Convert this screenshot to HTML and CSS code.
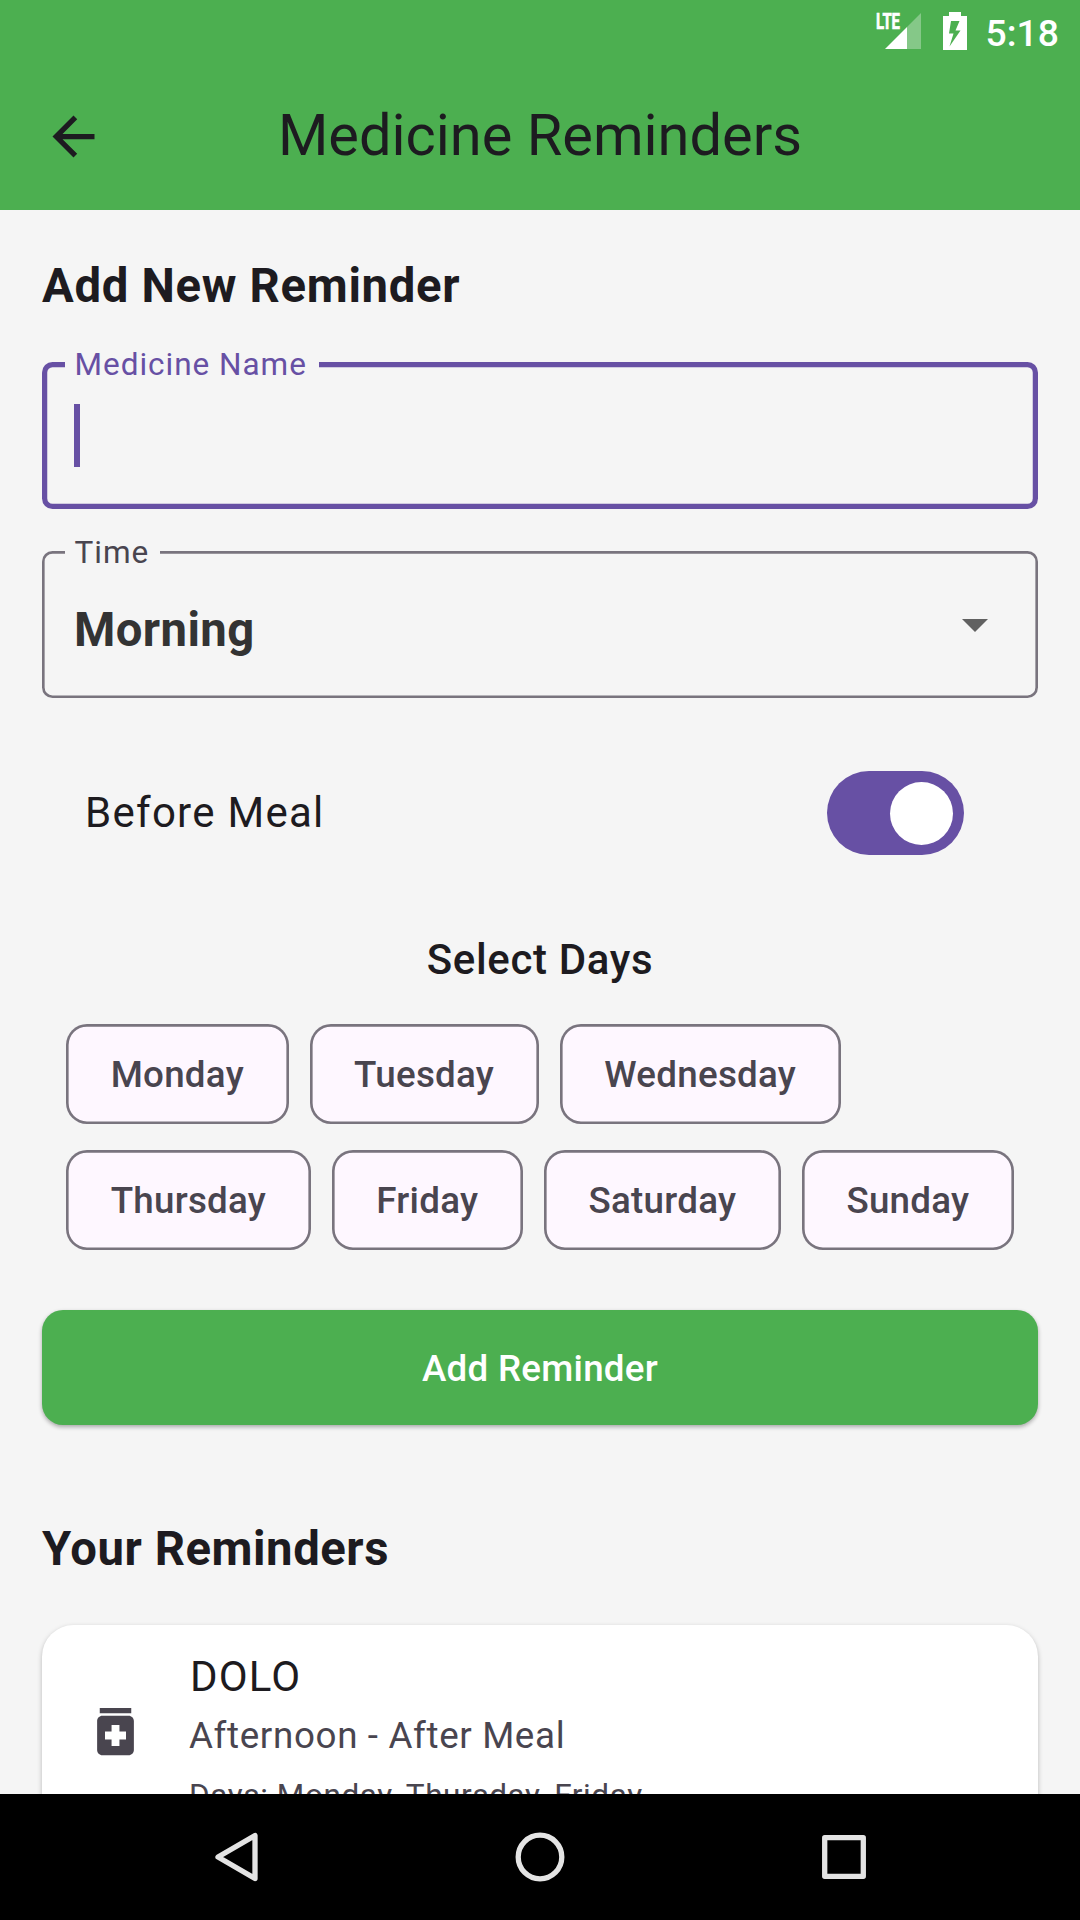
FILE: index.html
```html
<!DOCTYPE html>
<html lang="en">
<head>
<meta charset="utf-8">
<title>Medicine Reminders</title>
<link rel="stylesheet" href="styles.css">
</head>
<body>
<div class="screen">
  <header class="top">
    <div class="status">
      <svg class="signal" viewBox="0 0 48 40" width="48" height="40">
        <text class="lte" x="1" y="19" textLength="24" lengthAdjust="spacingAndGlyphs">LTE</text>
        <path d="M46 3V39H32V17Z" fill="#fff" fill-opacity=".32"/>
        <path d="M32 17V39H10Z" fill="#fff"/>
      </svg>
      <svg class="battery" viewBox="0 0 24 38" width="24" height="38">
        <path fill="#fff" fill-rule="evenodd" d="M6 0H18V4H24V38H0V4H6ZM8 9L6 21.500H10.500L6.500 34.500L17.500 18.500H12.500L16.500 9Z"/>
      </svg>
      <span class="clock">5:18</span>
    </div>
    <div class="appbar">
      <svg class="back" viewBox="0 0 24 24" width="63" height="63"><path fill="#1d1b20" d="M20 11H7.830l5.590-5.590L12 4l-8 8 8 8 1.410-1.410L7.830 13H20v-2z"/></svg>
      <h1 class="title">Medicine Reminders</h1>
    </div>
  </header>

  <main class="content">
    <h2 class="heading">Add New Reminder</h2>
    <div class="field field-focused">
      <span class="label">Medicine Name</span>
      <span class="caret"></span>
    </div>
    <div class="field field-select">
      <span class="label">Time</span>
      <span class="value">Morning</span>
      <svg class="drop" viewBox="0 0 26 13" width="26" height="13"><path fill="#616161" d="M0 0H26L13 13Z"/></svg>
    </div>
    <div class="meal">
      <span class="meal-label">Before Meal</span>
      <span class="switch"><span class="thumb"></span></span>
    </div>
    <h3 class="days-title">Select Days</h3>
    <div class="days">
      <div class="row"><button class="chip">Monday</button><button class="chip">Tuesday</button><button class="chip">Wednesday</button></div>
      <div class="row"><button class="chip">Thursday</button><button class="chip">Friday</button><button class="chip">Saturday</button><button class="chip">Sunday</button></div>
    </div>
    <button class="add">Add Reminder</button>
    <h2 class="heading list-heading">Your Reminders</h2>
    <article class="card">
      <svg class="pill" viewBox="0 0 24 24" width="63" height="63"><path fill="#49454f" d="M6 3h12v2H6zM17 6H7c-1.100 0-2 .9-2 2v11c0 1.100.9 2 2 2h10c1.100 0 2-.9 2-2V8c0-1.100-.9-2-2-2zm-1 9h-2.500v2.500h-3V15H8v-3h2.500V9.500h3V12H16v3z"/></svg>
      <div class="info">
        <div class="name">DOLO</div>
        <div class="when">Afternoon - After Meal</div>
        <div class="which">Days: Monday, Thursday, Friday</div>
      </div>
    </article>
  </main>

  <nav class="nav">
    <svg viewBox="0 0 54 54" width="54" height="54"><path d="M46 5.500V48.500L9 27Z" class="line"/></svg>
    <svg viewBox="0 0 54 54" width="54" height="54"><circle cx="27" cy="27" r="21.800" class="line"/></svg>
    <svg viewBox="0 0 54 54" width="54" height="54"><rect x="7.700" y="7.700" width="38.600" height="38.600" class="line"/></svg>
  </nav>
</div>
</body>
</html>
```
FILE: styles.css
```css
* { box-sizing: border-box; }
body { margin: 0; font-family: Roboto, sans-serif; color: #1d1b20; }
h1, h2, h3 { margin: 0; }
button { font-family: inherit; margin: 0; }
svg { display: block; flex: none; }

.screen {
  width: 1080px;
  height: 1920px;
  display: flex;
  flex-direction: column;
  background: #f5f5f5;
  overflow: hidden;
}

.top { height: 210px; flex: none; background: #4caf50; }
.status {
  height: 63px;
  display: flex;
  align-items: flex-start;
  justify-content: flex-end;
  padding-right: 21px;
  color: #fff;
}
.signal { margin: 10px 20px 0 0; }
.lte { font: 700 22px Roboto, sans-serif; fill: #fff; stroke: #fff; stroke-width: .7; }
.battery { margin: 12px 19px 0 0; }
.clock { font-size: 37.3px; font-weight: 500; line-height: 42px; margin-top: 12px; }

.appbar {
  height: 147px;
  display: grid;
  grid-template-columns: 147px 1fr 147px;
  align-items: center;
}
.back { margin-left: 42px; }
.title {
  font-size: 57.75px;
  font-weight: 400;
  line-height: 74px;
  padding-bottom: 4px;
  text-align: center;
}

.content {
  flex: 1;
  min-height: 0;
  overflow: hidden;
  padding: 48px 42px 0;
  display: flex;
  flex-direction: column;
}
.heading {
  flex: none;
  font-size: 47.25px;
  font-weight: 700;
  line-height: 56px;
  letter-spacing: .7px;
}

.field {
  flex: none;
  height: 147px;
  position: relative;
  display: flex;
  align-items: center;
  border-radius: 10.5px;
  padding: 0 50px 0 32px;
}
.field-focused { margin-top: 48.3px; box-shadow: inset 0 0 0 5.25px #6750a4; color: #6750a4; }
.field-select { margin-top: 42px; box-shadow: inset 0 0 0 2.625px #79747e; color: #49454f; }
.label {
  position: absolute;
  left: 23px;
  top: -16.5px;
  padding: 0 12px 0 9.5px;
  background: #f5f5f5;
  font-size: 31.5px;
  line-height: 38px;
  letter-spacing: .98px;
}
.field-select .label { top: -17.3px; padding-right: 11px; }
.caret { width: 6px; height: 63px; background: #6750a4; }
.value { flex: 1; color: #333; font-size: 47.25px; font-weight: 700; line-height: 56px; letter-spacing: .4px; margin-top: 10px; }
.drop { margin-top: 2px; }

.meal {
  flex: none;
  height: 84px;
  margin-top: 73px;
  padding: 0 74px 0 43px;
  display: flex;
  align-items: center;
  justify-content: space-between;
  font-size: 42px;
  letter-spacing: 1.28px;
}
.meal-label { line-height: 50px; }
.switch {
  width: 137px;
  height: 84px;
  padding: 10.5px 11px;
  border-radius: 42px;
  background: #6750a4;
  display: flex;
  justify-content: flex-end;
}
.thumb { width: 63px; height: 63px; border-radius: 50%; background: #fff; }

.days-title {
  flex: none;
  margin-top: 79.5px;
  font-size: 42px;
  font-weight: 500;
  line-height: 50px;
  letter-spacing: .65px;
  text-align: center;
}
.days {
  flex: none;
  margin-top: 38.8px;
  align-self: center;
  display: flex;
  flex-direction: column;
  gap: 25.7px;
}
.row { display: flex; gap: 21px; }
.chip {
  height: 100.3px;
  padding: 2px 44.6px 0;
  border: 0;
  border-radius: 21px;
  background: #fef7ff;
  box-shadow: inset 0 0 0 2.625px #79747e;
  color: #49454f;
  font-size: 36.75px;
  font-weight: 500;
  letter-spacing: .26px;
}
.add {
  flex: none;
  height: 115.5px;
  margin-top: 60px;
  padding: 2px 0 0;
  border: 0;
  border-radius: 21px;
  background: #4caf50;
  box-shadow: 0 2px 4px rgba(0, 0, 0, .32);
  color: #fff;
  font-size: 36.75px;
  font-weight: 500;
  letter-spacing: .26px;
}
.list-heading { margin-top: 95.5px; letter-spacing: .55px; }

.card {
  flex: none;
  height: 240px;
  margin-top: 47.7px;
  padding: 26.7px 42px 0;
  border-radius: 31.5px;
  background: #fff;
  box-shadow: 0 2px 5px rgba(0, 0, 0, .25);
  display: flex;
  gap: 42px;
}
.pill { margin-top: 48.3px; }
.info { padding-top: 1px; }
.name { padding-left: 1px; font-size: 42px; line-height: 50px; letter-spacing: 1.2px; }
.when { margin-top: 8.8px; font-size: 36.75px; line-height: 50px; letter-spacing: .65px; color: #49454f; }
.which { margin-top: 13px; font-size: 31.5px; line-height: 44px; letter-spacing: .6px; color: #49454f; }

.nav {
  flex: none;
  height: 126px;
  padding: 0 209px;
  background: #000;
  display: flex;
  align-items: center;
  justify-content: space-between;
}
.line { fill: none; stroke: #e4e4e4; stroke-width: 5.3; stroke-linejoin: round; }
```
